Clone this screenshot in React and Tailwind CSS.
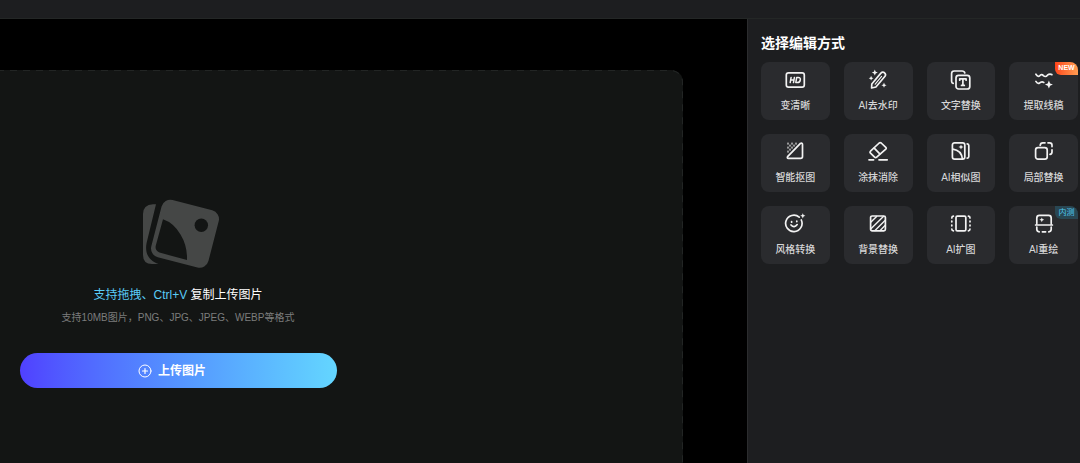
import React, { useState } from 'react';

const sparkle = (x, y, r) =>
  `M${x} ${y - r}L${x + r * 0.3} ${y - r * 0.3}L${x + r} ${y}L${x + r * 0.3} ${y + r * 0.3}L${x} ${y + r}L${x - r * 0.3} ${y + r * 0.3}L${x - r} ${y}L${x - r * 0.3} ${y - r * 0.3}Z`;

const Sparkle = ({ x, y, r }) => <path d={sparkle(x, y, r)} fill="currentColor" stroke="none" />;

const Icon = ({ children }) => (
  <svg
    viewBox="0 0 22 22"
    className="w-[22px] h-[22px] text-[#f2f2f2]"
    fill="none"
    stroke="currentColor"
    strokeWidth="1.7"
    strokeLinecap="round"
    strokeLinejoin="round"
    aria-hidden="true"
  >
    {children}
  </svg>
);

const IconHd = () => (
  <Icon>
    <rect x="2.3" y="3.8" width="18" height="14.4" rx="2.2" />
    <path d="M7.1 8.4L6.2 13.6M10.4 8.4L9.5 13.6M6.7 11H9.9M12.7 8.4H14.2Q16.8 8.5 16.3 11Q15.8 13.6 13.3 13.6H11.8Z" strokeWidth="1.5" />
  </Icon>
);

const IconWand = () => (
  <Icon>
    <path d="M4.8 15L13.9 4.1Q15.6 2.4 17.5 3.8Q19.3 5.4 18 7.2L8.9 18L4.6 19Z" />
    <path d="M8.2 15.2L14.6 7.4" strokeWidth="1.1" />
    <Sparkle x={7.8} y={3.6} r={3} />
    <Sparkle x={4.1} y={9.2} r={2.4} />
    <Sparkle x={17} y={16.2} r={2.6} />
  </Icon>
);

const IconTextSwap = () => (
  <Icon>
    <path d="M3.2 14.4Q1.6 14 1.6 12.2V4.6Q1.6 2 4.2 2H12Q14.4 2 14.8 4" />
    <rect x="6" y="6.4" width="13.8" height="13.6" rx="2.6" />
    <path d="M9.7 11.2V9.9H16.1V11.2M12.9 9.9V16.4M11.5 16.4H14.3" />
  </Icon>
);

const IconLineArt = () => (
  <Icon>
    <path d="M2.9 5.2Q4.6 8 6.5 7Q8.6 4.4 10.4 6.6Q12.5 8.6 14.4 6.2Q16.4 4.6 18.9 5.6" />
    <path d="M2.9 12.4Q4.4 15 6.4 14.2Q8.4 12.2 10.8 13.4" />
    <Sparkle x={15.9} y={15.6} r={4} />
  </Icon>
);

const IconCutout = () => (
  <Icon>
    <g fill="currentColor" stroke="none" opacity="0.55">
      <rect x="3" y="1.6" width="2" height="2" />
      <rect x="7" y="1.6" width="2" height="2" />
      <rect x="11" y="1.6" width="2" height="2" />
      <rect x="5" y="3.6" width="2" height="2" />
      <rect x="9" y="3.6" width="2" height="2" />
      <rect x="3" y="5.6" width="2" height="2" />
      <rect x="7" y="5.6" width="2" height="2" />
      <rect x="5" y="7.6" width="2" height="2" />
      <rect x="3" y="9.6" width="2" height="2" />
    </g>
    <path d="M3.6 15.6L16.2 2.6Q18.5 1.4 18.5 3.6V15.6Q18.5 17.4 16.6 17.4H4.4Q2.8 17.2 3.6 15.6Z" />
  </Icon>
);

const IconEraser = () => (
  <Icon>
    <path d="M12.2 2Q13.2 1.1 14.2 2L18.8 6.4Q19.7 7.3 18.8 8.2L9.7 16.2Q8.6 17.2 7.6 16.2L3.5 12.2Q2.6 11.2 3.5 10.2Z" />
    <path d="M7.2 7.2L12.8 12.9" />
    <path d="M2 18.8H6.6M12 18.8H20.2" />
  </Icon>
);

const IconSimilar = () => (
  <Icon>
    <rect x="2.4" y="1.8" width="12.4" height="16.4" rx="2.2" />
    <path d="M2.8 8.2Q11.4 9.4 12.4 18" />
    <path d="M17.2 2.8Q18.8 3 18.8 4.6V15.4Q18.8 17 17.2 17.2" />
    <Sparkle x={11} y={6} r={2.6} />
  </Icon>
);

const IconPartSwap = () => (
  <Icon>
    <rect x="2.6" y="6.6" width="11.6" height="11.6" rx="2.4" />
    <path d="M7.2 4.4Q7.4 1.8 9.8 1.8H12M15 1.8H16.6Q19 1.8 19 4.2V5.6M19 8.8V11Q19 13.2 17 13.4" />
  </Icon>
);

const IconStyle = () => (
  <Icon>
    <path d="M15.2 4.2A8.2 8.2 0 1 0 17.3 7" />
    <path d="M7 12Q10.2 15.6 13.2 11.6M7.6 8.6V9.2M12.8 8V8.6" />
    <Sparkle x={18.8} y={2.8} r={2.6} />
  </Icon>
);

const IconBackground = () => (
  <Icon>
    <rect x="3.6" y="3" width="14.8" height="14.8" rx="1.6" />
    <path d="M4 9L9.6 3.4M4.2 15.6L16.4 3.4M8 17.4L18 7.6M13.2 17.4L18 12.6" strokeWidth="1.4" />
  </Icon>
);

const IconExpand = () => (
  <Icon>
    <rect x="6" y="3.2" width="9.8" height="14.6" rx="1.4" />
    <path d="M3.4 3.2Q1.8 3.4 1.8 5M1.8 8V8.8M1.8 12V12.8M1.8 16Q1.8 17.6 3.4 17.8M18.4 3.2Q20 3.4 20 5M20 8V8.8M20 12V12.8M20 16Q20 17.6 18.4 17.8" />
  </Icon>
);

const IconRedraw = () => (
  <Icon>
    <path d="M3.8 10.6V5Q3.8 2.4 6.4 2.4H15.6Q18.2 2.4 18.2 5V10.6M2.6 12H19.4" />
    <path d="M3.8 14V16.4Q4 18.6 6.2 18.8M9.4 18.8H12.6M15.8 18.8Q18 18.6 18.2 16.4V14" />
    <Sparkle x={8.8} y={6.8} r={2.4} />
  </Icon>
);

const tools = [
  { name: '变清晰', icon: IconHd },
  { name: 'AI去水印', icon: IconWand },
  { name: '文字替换', icon: IconTextSwap },
  { name: '提取线稿', icon: IconLineArt, badge: 'NEW' },
  { name: '智能抠图', icon: IconCutout },
  { name: '涂抹消除', icon: IconEraser },
  { name: 'AI相似图', icon: IconSimilar },
  { name: '局部替换', icon: IconPartSwap },
  { name: '风格转换', icon: IconStyle },
  { name: '背景替换', icon: IconBackground },
  { name: 'AI扩图', icon: IconExpand },
  { name: 'AI重绘', icon: IconRedraw, badge: '内测' },
];

const Badge = ({ text }) => (
  <span
    className={`absolute top-0 right-0 flex h-[13px] w-[23px] items-center justify-center rounded-tr-lg rounded-bl-md ${
      text === 'NEW'
        ? 'bg-gradient-to-r from-[#ff4319] to-[#ff9c52] text-[7px] font-bold text-white'
        : 'bg-[#294753] text-[8px] text-[#4fc9f3]'
    }`}
  >
    {text}
  </span>
);

const ToolCard = ({ tool, onSelect }) => (
  <button
    type="button"
    onClick={() => onSelect(tool.name)}
    className="relative flex h-[58px] flex-col items-center rounded-lg bg-[#2a2b2e] pt-[7px] hover:bg-[#34353a]"
  >
    <tool.icon />
    <span className="mt-2 text-[10px] leading-[14px] font-medium text-[#d6d6d7]">{tool.name}</span>
    {tool.badge && <Badge text={tool.badge} />}
  </button>
);

const PhotoStack = () => (
  <svg viewBox="-6 0 82 70" className="h-[70px] w-[82px]" fill="#454746" aria-hidden="true">
    <path d="M13 5.3H10Q0 6 0 15V56Q0 65 9 65H15.5C6 62 1.5 54 3.6 44Z" />
    <rect x="12.5" y="5.3" width="59" height="59" rx="9" transform="rotate(14.5 42 34.8)" />
    <path d="M20 20.2Q31 24 37.5 35.5Q44.5 47 44 61L16.5 53.6Q11.6 51.5 12.8 46.5Z" fill="#131514" />
    <circle cx="58.3" cy="26.3" r="6.7" fill="#131514" />
  </svg>
);

const UploadArea = () => (
  <section className="relative -ml-[327px] mr-16 mt-[51px] flex flex-1 flex-col items-center overflow-hidden rounded-t-xl bg-[#131514] pt-[129px]">
    {/* Borde discontinuo */}
    <svg className="absolute inset-0 h-full w-full" aria-hidden="true">
      <rect width="100%" height="120%" rx="12" fill="none" stroke="#222524" strokeWidth="2" strokeDasharray="7 6" />
    </svg>
    <PhotoStack />
    <p className="mt-4 text-xs leading-5 text-white">
      <span className="text-[#5accf7]">支持拖拽、Ctrl+V</span> 复制上传图片
    </p>
    <p className="mt-[5px] text-[10px] leading-4 text-[#7c7d7d]">支持10MB图片，PNG、JPG、JPEG、WEBP等格式</p>
    <button
      type="button"
      className="relative mt-[27px] flex h-[35px] w-[317px] items-center justify-center gap-[6px] rounded-full bg-gradient-to-r from-[#5040ff] to-[#64d6ff] pr-3 text-xs font-bold text-white"
    >
      <svg viewBox="0 0 14 14" className="h-[14px] w-[14px]" fill="none" stroke="currentColor" strokeLinecap="round" aria-hidden="true">
        <circle cx="7" cy="7" r="6" />
        <path d="M7 4.5V9.5M4.5 7H9.5" strokeWidth="1.2" />
      </svg>
      上传图片
    </button>
  </section>
);

const App = () => {
  const [, setSelected] = useState(null);

  return (
    <div className="flex min-h-screen flex-col bg-black font-['Liberation_Sans','Noto_Sans_CJK_SC',sans-serif]">
      <header className="h-[19px] border-b border-[#242726] bg-[#1d1e20]" />
      <div className="flex flex-1">
        <main className="flex min-w-0 flex-1 flex-col overflow-hidden">
          <UploadArea />
        </main>
        <aside className="w-[333px] shrink-0 border-l border-[#2b2c2e] bg-[#1d1e20] pt-[14px] pr-[2px] pl-[13px]">
          <h2 className="text-sm leading-5 font-bold text-white">选择编辑方式</h2>
          <div className="mt-[9px] grid grid-cols-4 gap-[14px]">
            {tools.map((tool) => (
              <ToolCard key={tool.name} tool={tool} onSelect={setSelected} />
            ))}
          </div>
        </aside>
      </div>
    </div>
  );
};

export default App;
